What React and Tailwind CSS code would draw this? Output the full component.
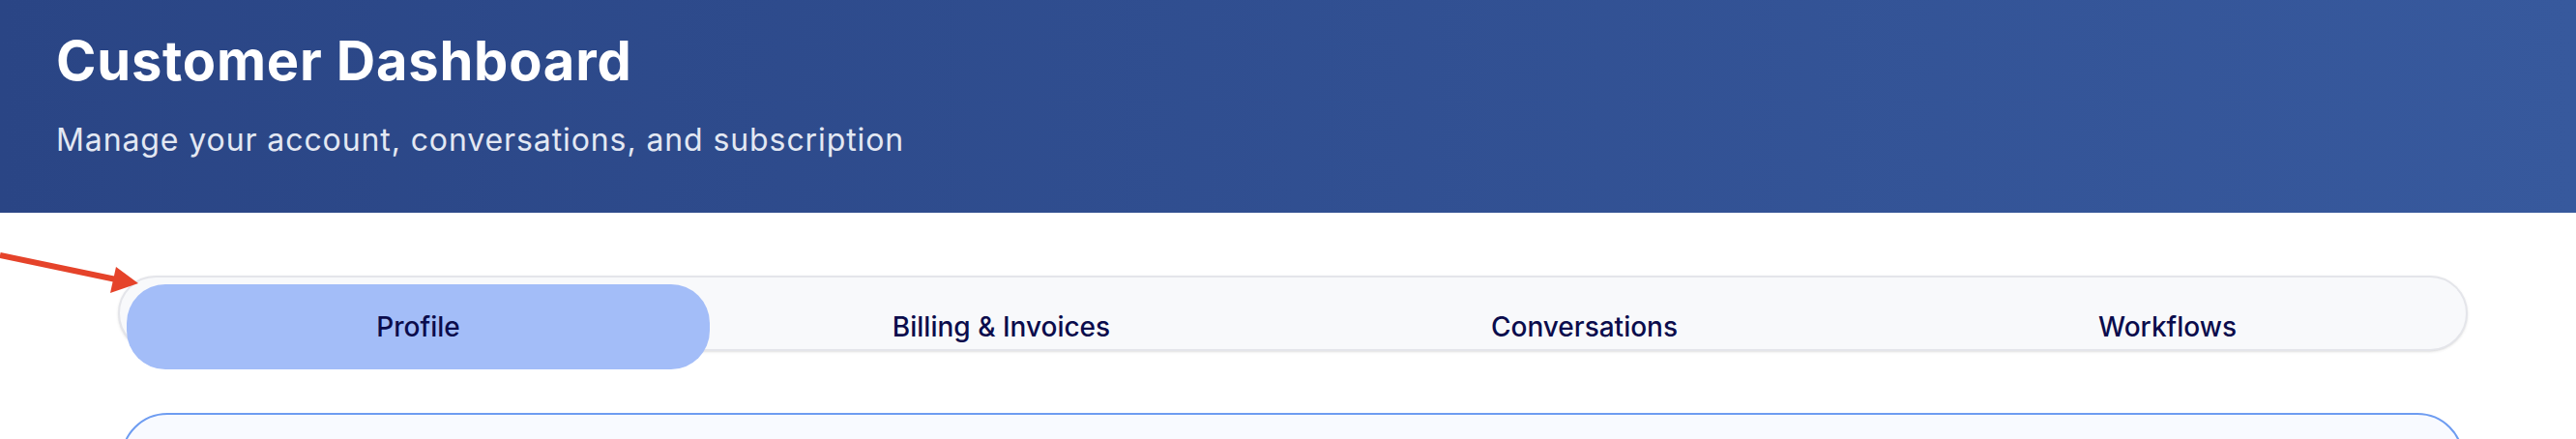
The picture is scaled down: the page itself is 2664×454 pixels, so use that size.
import { useState } from "react";

const tabs = ["Profile", "Billing & Invoices", "Conversations", "Workflows"];

export default function App() {
  const [active, setActive] = useState("Profile");

  return (
    <div
      className="relative min-h-screen bg-white"
      style={{ fontFamily: "Inter, 'Noto Sans', sans-serif" }}
    >
      {/* Header */}
      <header className="bg-linear-to-r from-[#2a4585] to-[#37599d] pl-[58px] pt-[30px] pb-[51px]">
        <h1 className="text-[56px] leading-[67px] font-bold text-white tracking-[0.8px]">
          Customer Dashboard
        </h1>
        <p className="mt-[24px] text-[32px] leading-[48px] text-[#e3e8f3] tracking-[0.9px]">
          Manage your account, conversations, and subscription
        </p>
      </header>

      {/* Tabs */}
      <div className="ml-[122px] mt-[65px] w-[2430px]">
        <div className="flex h-[78px] items-start rounded-full border-2 border-[#e4e5ea] bg-[#f8f9fb] p-[7px] shadow-sm">
          {tabs.map((t) => (
            <button
              key={t}
              onClick={() => setActive(t)}
              className={`flex h-[88px] flex-1 items-center justify-center rounded-[40px] text-[28px] font-medium text-[#0b0c4c] ${
                active === t ? "bg-[#a3bdf8]" : ""
              }`}
            >
              {t}
            </button>
          ))}
        </div>
      </div>

      {/* Content card */}
      <div className="ml-[125px] mt-[64px] h-[240px] w-[2423px] rounded-[48px] border-2 border-[#6e9cf1] bg-[#f8faff]" />

      {/* Annotation arrow */}
      <svg
        className="absolute left-0 top-[240px]"
        width="160"
        height="80"
        viewBox="0 0 160 80"
      >
        <line x1="0" y1="24" x2="120" y2="49" stroke="#e5432a" strokeWidth="6" />
        <polygon points="143,53 120,36 114,63" fill="#e5432a" />
      </svg>
    </div>
  );
}
